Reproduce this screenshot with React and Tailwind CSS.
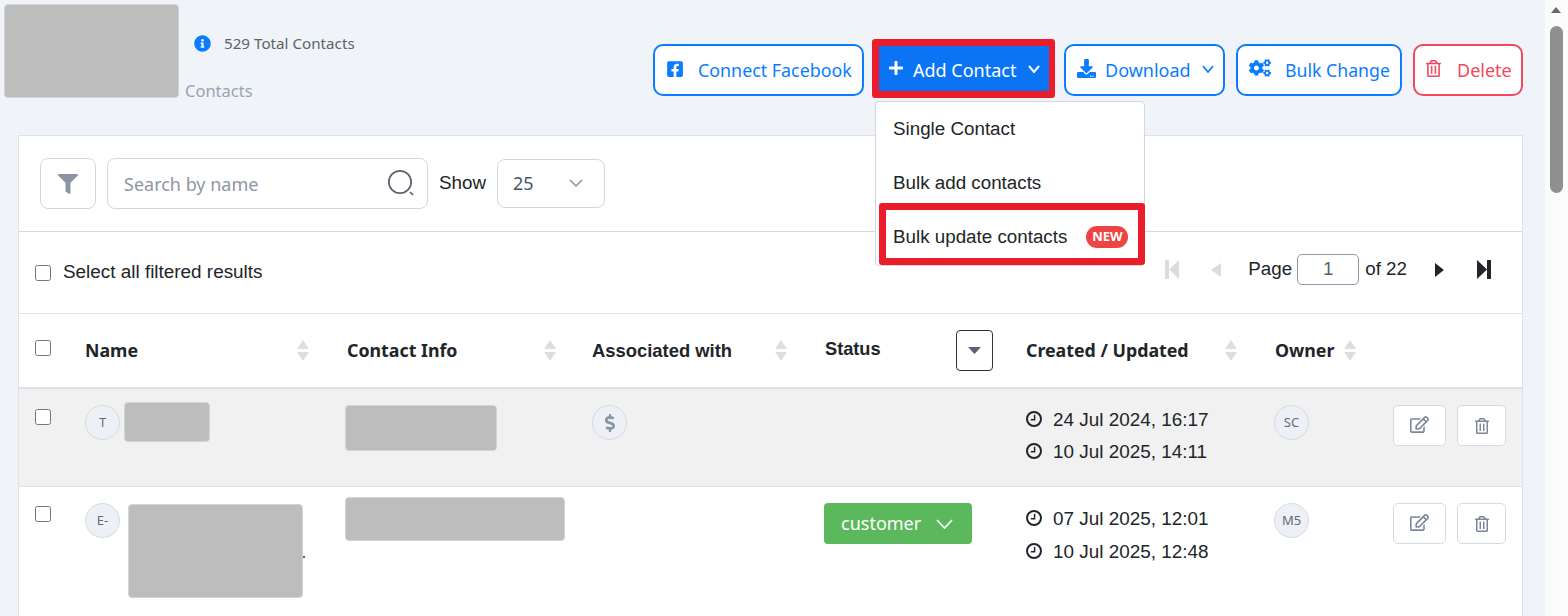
import React from "react";
import { FaFacebookSquare, FaPlus, FaDownload, FaCogs, FaRegTrashAlt, FaFilter, FaInfoCircle, FaRegEdit, FaDollarSign } from "react-icons/fa";

const noto = "font-['Noto_Sans',sans-serif]";
const arial = "font-['Liberation_Sans',sans-serif]";
const cols = "grid grid-cols-[66px_260px_247px_232px_202px_249px_1fr]";

function Sort({ className = "" }) {
  return (
    <svg width="12" height="21" viewBox="0 0 12 21" className={className}>
      <path d="M6 0L12 9H0Z" fill="#dcdee1" />
      <path d="M6 21L12 12H0Z" fill="#dcdee1" />
    </svg>
  );
}

function Chevron({ w, h, sw, color = "currentColor", className = "" }) {
  return (
    <svg width={w} height={h} viewBox={`0 0 ${w} ${h}`} className={`shrink-0 ${className}`}>
      <path d={`M1 1L${w / 2} ${h - 1}L${w - 1} 1`} fill="none" stroke={color} strokeWidth={sw} />
    </svg>
  );
}

function Clock() {
  return (
    <svg width="16" height="16" viewBox="0 0 16 16" className="shrink-0 -mt-[1px]">
      <circle cx="8" cy="8" r="7" fill="none" stroke="#212529" strokeWidth="2" />
      <path d="M8.6 3.800V8.700H4.800" fill="none" stroke="#212529" strokeWidth="1.500" />
    </svg>
  );
}

function Avatar({ children }) {
  return (
    <div className={`${noto} w-[35px] h-[35px] shrink-0 rounded-full border border-[#d5dbe3] bg-[#edf1f5] flex items-center justify-center text-[#5f6b7e] text-[13px]`}>
      {children}
    </div>
  );
}

function Block({ className }) {
  return <div className={`bg-[#bdbdbd] border border-[#d4d4d4] rounded-[4px] ${className}`} />;
}

function DateLines({ a, b, className }) {
  return (
    <div className={`${arial} text-[18.9px] text-[#212529] flex flex-col leading-[21px] ${className}`}>
      <div className="flex items-center gap-[11px]"><Clock />{a}</div>
      <div className="flex items-center gap-[11px]"><Clock />{b}</div>
    </div>
  );
}

function Actions() {
  return (
    <div className="flex justify-end gap-[11px] mr-[16px]">
      <button className="w-[53px] h-[41px] bg-white border border-[#d5dbe3] rounded-[5px] flex items-center justify-center text-[#7b8798]">
        <FaRegEdit size={19} className="-mt-[3px]" />
      </button>
      <button className="w-[49px] h-[41px] bg-white border border-[#d5dbe3] rounded-[5px] flex items-center justify-center text-[#7b8798]">
        <FaRegTrashAlt size={16} />
      </button>
    </div>
  );
}

function OutlineBtn({ children, className = "" }) {
  return (
    <button className={`${noto} h-[52px] bg-white border-2 border-[#0a7cff] rounded-[10px] text-[#0a7cff] text-[18px] flex items-center whitespace-nowrap ${className}`}>
      {children}
    </button>
  );
}

export default function App() {
  return (
    <div className="flex h-[616px] w-full overflow-hidden bg-[#f0f4f9]">
      <main className="relative w-[1545px] shrink-0 h-[616px] overflow-hidden">
        {/* page head */}
        <header className="flex h-[135px] pl-[4px] pr-[22px]">
          <Block className="w-[175px] h-[94px] mt-[4px] shrink-0" />
          <div className="ml-[6px] w-[440px] shrink-0">
            <div className={`${noto} flex items-center text-[15.2px] text-[#5f6368] ml-[9px] mt-[33px] h-[21px]`}>
              <FaInfoCircle size={17} className="text-[#0a7cff] mr-[13px]" />
              529 Total Contacts
            </div>
            <div className={`${noto} text-[16.5px] text-[#9aa3af] mt-[26px] leading-[22px]`}>Contacts</div>
          </div>
          <div className="flex-1 flex justify-end items-start gap-[8px] mt-[39px]">
            <OutlineBtn className="w-[211px] pl-[11px] mt-[5px]">
              <FaFacebookSquare size={18} className="mr-[14px] -mt-[2px]" />
              <span className="text-[17.85px]">Connect Facebook</span>
            </OutlineBtn>
            <div className="border-y-[7px] border-l-[7px] border-r-[6px] border-[#ed1c2b] rounded-[3px] h-[59px] mr-[1px]">
              <button className={`${noto} h-[45px] w-[170px] bg-[#0a74f5] text-white text-[18px] flex items-center pl-[9px] whitespace-nowrap`}>
                <FaPlus size={16} className="mr-[9px] -mt-[2px]" />
                <span className="pt-[3px]">Add Contact</span>
                <Chevron w={12} h={8} sw={2} className="ml-[12px]" />
              </button>
            </div>
            <OutlineBtn className="w-[161px] pl-[11px] mt-[5px]">
              <FaDownload size={19} className="mr-[9px] -mt-[4px]" />
              Download
              <Chevron w={12} h={8} sw={1.700} className="ml-[11px] -mt-[3px]" />
            </OutlineBtn>
            <OutlineBtn className="w-[166px] pl-[11px] ml-[3px] mt-[5px]">
              <FaCogs size={22} className="mr-[14px] -mt-[4px]" />
              <span className="text-[17.7px]">Bulk Change</span>
            </OutlineBtn>
            <button className={`${noto} h-[52px] w-[110px] ml-[3px] mt-[5px] bg-white border-2 border-[#f1475f] rounded-[10px] text-[#f1475f] text-[18px] flex items-center pl-[10px] whitespace-nowrap`}>
              <FaRegTrashAlt size={17} className="mr-[15px] -mt-[4px]" />
              Delete
            </button>
          </div>
        </header>

        {/* card */}
        <section className="ml-[18px] w-[1505px] bg-white border border-[#dfe3e8] border-b-0">
          <div className="h-[96px] border-b border-[#d5dae0] flex items-start pl-[21px] pt-[22px]">
            <button className="w-[56px] h-[51px] border border-[#d2d7df] rounded-[8px] flex items-center justify-center text-[#8b94a5]">
              <FaFilter size={20} />
            </button>
            <div className="ml-[11px] w-[321px] h-[51px] border border-[#d2d7df] rounded-[8px] flex items-center justify-between pl-[16px] pr-[12px]">
              <span className={`${noto} text-[18px] text-[#8f96a3] pt-[1px]`}>Search by name</span>
              <svg width="28" height="28" viewBox="0 0 28 28" className="-mt-[1px]">
                <circle cx="13" cy="13" r="11.200" fill="none" stroke="#5b6470" strokeWidth="1.700" />
                <path d="M23 23L26 26" stroke="#5b6470" strokeWidth="1.700" />
              </svg>
            </div>
            <span className={`${arial} text-[18.8px] text-[#212529] ml-[11px] mt-[14px] leading-[21px]`}>Show</span>
            <div className={`${noto} ml-[11px] mt-[1px] w-[108px] h-[49px] border border-[#d2d7df] rounded-[8px] flex items-center justify-between pl-[15px] pr-[21px] text-[18px] text-[#4b5563]`}>
              25
              <Chevron w={14} h={8} sw={1.500} color="#8b94a5" className="-mt-[2px]" />
            </div>
          </div>

          <div className="h-[82px] border-b border-[#dfe3e8] flex items-center pl-[16px] pr-[31px]">
            <input type="checkbox" readOnly className="w-4 h-4 m-0" />
            <span className={`${arial} text-[18.9px] text-[#212529] ml-[12px]`}>Select all filtered results</span>
            <div className={`${arial} ml-auto -mt-[6px] flex items-center text-[18.8px] text-[#212529]`}>
              <svg width="14" height="19" viewBox="0 0 14 19" className="mr-[32px]">
                <path d="M0 0H4V19H0ZM14 0V19L4 9.500Z" fill="#dcdcdc" />
              </svg>
              <svg width="10" height="14" viewBox="0 0 10 14" className="mr-[27px]">
                <path d="M10 0V14L0 7Z" fill="#dcdcdc" />
              </svg>
              <span>Page</span>
              <div className="ml-[5px] w-[62px] h-[31px] border border-[#8d97a5] rounded-[5px] flex items-center justify-center text-[#5f6368]">1</div>
              <span className="ml-[6px]">of 22</span>
              <svg width="9" height="14" viewBox="0 0 9 14" className="ml-[28px]">
                <path d="M0 0V14L9 7Z" fill="#212529" />
              </svg>
              <svg width="14" height="19" viewBox="0 0 14 19" className="ml-[33px]">
                <path d="M0 0L10 9.500L0 19ZM10 0H14V19H10Z" fill="#212529" />
              </svg>
            </div>
          </div>

          {/* table head */}
          <div className={`${cols} h-[75px] border-b-2 border-[#dee2e6] items-center text-[17.8px] text-[#212529]`}>
            <div className="pl-[16px] -mt-[6px]"><input type="checkbox" readOnly className="w-4 h-4 m-0 block" /></div>
            <div className={`${noto} font-bold flex items-center justify-between pr-[36px]`}>Name<Sort /></div>
            <div className={`${noto} font-bold flex items-center justify-between pr-[36px] pl-[2px]`}>Contact Info<Sort /></div>
            <div className={`${arial} font-bold flex items-center justify-between pr-[37px]`}>
              <span className="text-[18.4px] pt-[1px]">Associated with</span><Sort />
            </div>
            <div className={`${arial} font-bold flex items-center justify-between pr-[33px] pl-[1px]`}>
              <span className="text-[18.2px] -mt-[2px]">Status</span>
              <span className="w-[37px] h-[41px] border border-[#2c3442] rounded-[4px] flex items-center justify-center">
                <svg width="13" height="7" viewBox="0 0 13 7"><path d="M0 0H13L6.500 7Z" fill="#5a6270" /></svg>
              </span>
            </div>
            <div className={`${noto} font-bold flex items-center justify-between pr-[38px]`}>Created / Updated<Sort /></div>
            <div className={`${noto} font-bold flex items-center gap-[10px]`}>Owner<Sort /></div>
          </div>

          {/* row one */}
          <div className={`${cols} h-[98px] border-b border-[#dfe3e8] bg-[#f1f1f1] items-start`}>
            <div className="pl-[16px] pt-[20px]"><input type="checkbox" readOnly className="w-4 h-4 m-0 block" /></div>
            <div className="flex items-start pt-[13px]">
              <div className="mt-[3px]"><Avatar>T</Avatar></div>
              <Block className="w-[86px] h-[40px] ml-[4px]" />
            </div>
            <div className="pt-[16px]"><Block className="w-[152px] h-[46px]" /></div>
            <div className="pt-[16px]">
              <div className="w-[35px] h-[35px] rounded-full border border-[#d5dbe3] bg-[#edf1f5] flex items-center justify-center text-[#8b94a5]">
                <FaDollarSign size={18} />
              </div>
            </div>
            <div />
            <DateLines a="24 Jul 2024, 16:17" b="10 Jul 2025, 14:11" className="mt-[20px] gap-[11px]" />
            <div className="flex justify-between pt-[16px] -ml-[1px]">
              <Avatar>SC</Avatar>
              <Actions />
            </div>
          </div>

          {/* row two */}
          <div className={`${cols} h-[129px] bg-white items-start`}>
            <div className="pl-[16px] pt-[19px]"><input type="checkbox" readOnly className="w-4 h-4 m-0 block" /></div>
            <div className="flex items-start pt-[16px]">
              <Avatar>E-</Avatar>
              <Block className="w-[175px] h-[94px] ml-[8px] mt-[1px]" />
              <span className="w-[2px] h-[2px] bg-[#0a74f5] mt-[53px]" />
            </div>
            <div className="pt-[10px]"><Block className="w-[220px] h-[44px]" /></div>
            <div />
            <div className="pt-[16px]">
              <button className={`${noto} w-[148px] h-[41px] rounded-[4px] bg-[#5cb85c] text-white text-[18px] flex items-center pl-[17px]`}>
                customer
                <Chevron w={17} h={10} sw={1.700} className="ml-[15px]" />
              </button>
            </div>
            <DateLines a="07 Jul 2025, 12:01" b="10 Jul 2025, 12:48" className="mt-[21px] gap-[12px]" />
            <div className="flex justify-between pt-[16px] -ml-[1px]">
              <Avatar>M5</Avatar>
              <Actions />
            </div>
          </div>
        </section>

        {/* dropdown over the page */}
        <div className={`${arial} absolute left-[875px] top-[101px] w-[270px] h-[165px] bg-white border border-[#d2d7df] rounded-[4px] text-[18.8px] text-[#212529]`}>
          <div className="h-[54px] flex items-center pl-[17px]">Single Contact</div>
          <div className="h-[54px] flex items-center pl-[17px]">Bulk add contacts</div>
          <div className="h-[54px] flex items-center pl-[17px]">
            Bulk update contacts
            <span className={`${noto} ml-[19px] w-[42px] h-[22px] rounded-full bg-[#ef4444] text-white text-[13px] font-bold flex items-center justify-center`}>NEW</span>
          </div>
        </div>
        {/* red annotation */}
        <div className="absolute left-[879px] top-[203px] w-[266px] h-[62px] border-[7px] border-[#ed1c2b] rounded-[3px]" />
      </main>

      {/* page scrollbar */}
      <aside className="flex-1 h-full bg-[#fbfbfb] flex flex-col items-start pl-[5px]">
        <svg width="10" height="6" viewBox="0 0 10 6" className="mt-[7px] ml-[1px]"><path d="M5 0L10 6H0Z" fill="#6a6a6a" /></svg>
        <div className="w-[13px] h-[167px] mt-[13px] rounded-full bg-[#8f8f8f]" />
      </aside>
    </div>
  );
}
